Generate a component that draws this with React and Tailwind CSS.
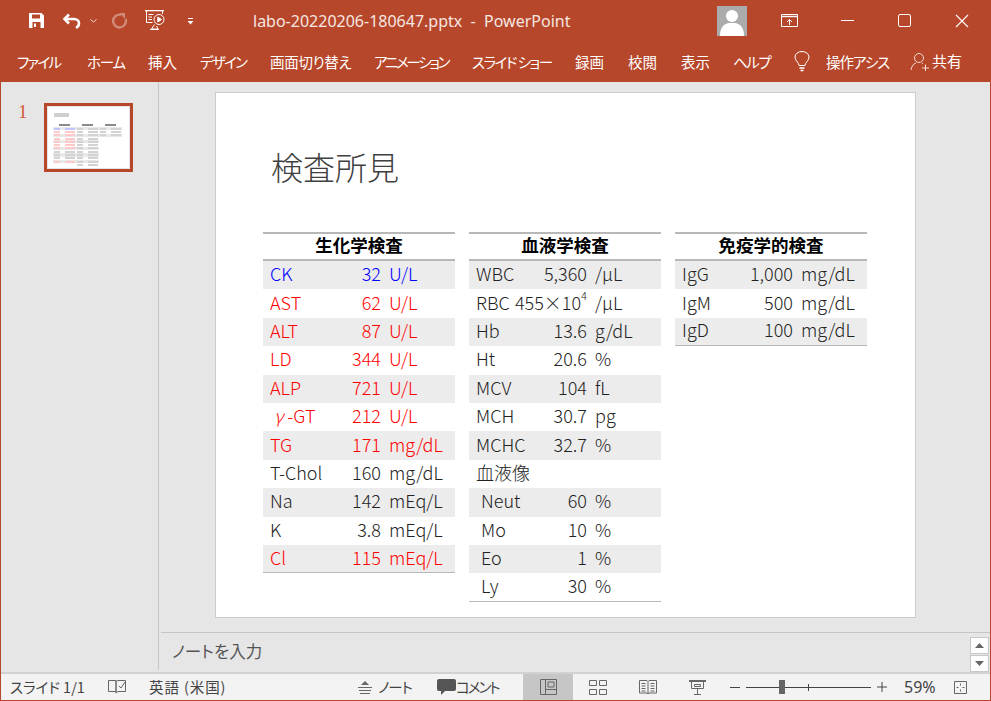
import React from "react";

const chem = [
  ["CK", "32", "U/L", "text-[#0000ff]"],
  ["AST", "62", "U/L", "text-[#ff0000]"],
  ["ALT", "87", "U/L", "text-[#ff0000]"],
  ["LD", "344", "U/L", "text-[#ff0000]"],
  ["ALP", "721", "U/L", "text-[#ff0000]"],
  [<span className="pl-[4px]"><i>γ</i> -GT</span>, "212", "U/L", "text-[#ff0000]"],
  ["TG", "171", "mg/dL", "text-[#ff0000]"],
  ["T-Chol", "160", "mg/dL", ""],
  ["Na", "142", "mEq/L", ""],
  ["K", "3.8", "mEq/L", ""],
  ["Cl", "115", "mEq/L", "text-[#ff0000]"],
];

const blood = [
  ["WBC", "5,360", "/μL"],
  ["RBC", <span>455×10<sup className="text-[11px] align-[4px] leading-none">4</sup></span>, "/μL"],
  ["Hb", "13.6", "g/dL"],
  ["Ht", "20.6", "%"],
  ["MCV", "104", "fL"],
  ["MCH", "30.7", "pg"],
  ["MCHC", "32.7", "%"],
  ["血液像", "", ""],
  [<span className="pl-[5px]">Neut</span>, "60", "%"],
  [<span className="pl-[5px]">Mo</span>, "10", "%"],
  [<span className="pl-[5px]">Eo</span>, "1", "%"],
  [<span className="pl-[5px]">Ly</span>, "30", "%"],
];

const immune = [
  ["IgG", "1,000", "mg/dL"],
  ["IgM", "500", "mg/dL"],
  ["IgD", "100", "mg/dL"],
];

const tabs = [
  ["ファイル", "w-[86px] pl-[16px] tracking-[-1.7px]"],
  ["ホーム", "w-[61px] tracking-[-1.2px]"],
  ["挿入", "w-[52px]"],
  ["デザイン", "w-[70px] tracking-[-1.7px]"],
  ["画面切り替え", "w-[104px] tracking-[-0.3px]"],
  ["アニメーション", "w-[98px] tracking-[-2.3px]"],
  ["スライド ショー", "w-[103px] tracking-[-1.5px]"],
  ["録画", "w-[53px]"],
  ["校閲", "w-[53px]"],
  ["表示", "w-[52px]"],
  ["ヘルプ", "w-[61px] tracking-[-1.5px]"],
];

function Row({ name, value, unit, color, shade, last }) {
  return (
    <div
      className={`grid grid-cols-[118px_1fr] h-[28.4px] pb-[4px] items-center text-[18px] leading-none font-light ${shade ? "bg-[#ececec]" : ""} ${color || "text-[#222222]"} ${last ? "border-b border-[#b8b8b8]" : ""}`}
    >
      <div className="relative flex items-center justify-end whitespace-nowrap">
        <span className="absolute left-[7px] whitespace-pre">{name}</span>
        <span>{value}</span>
      </div>
      <span className="pl-[8px] whitespace-nowrap">{unit}</span>
    </div>
  );
}

function LabTable({ title, children }) {
  return (
    <div className="w-[192px]">
      <div className="h-[29px] pb-[2px] border-t-2 border-b-2 border-[#b8b8b8] flex items-center justify-center text-[17.5px] font-bold text-black">
        {title}
      </div>
      {children}
    </div>
  );
}

function ThumbCol({ colors }) {
  return (
    <div className="w-[23px]">
      <div className="h-[4px] flex justify-center items-center"><div className="h-[2px] w-[11px] bg-[#8a8a8a]"></div></div>
      {colors.map((c, i) => (
        <div key={i} className={`h-[3.3px] flex justify-between items-center px-[1px] ${i % 2 === 0 ? "bg-[#e8e8e8]" : ""}`}>
          <div className={`h-[2px] w-[6px] ${c}`}></div>
          <div className={`h-[2px] w-[10px] ${c}`}></div>
        </div>
      ))}
    </div>
  );
}

function Thumb() {
  const r = "bg-[#ffc9c9]";
  const g = "bg-[#d2d2d2]";
  return (
    <div className="w-[89px] h-[69px] border-[3px] border-[#b7472a] bg-[#e4e4e4] p-[1px] shrink-0">
      <div className="w-full h-full bg-white pt-[6px] pl-[5px]">
        <div className="h-[4px] w-[15px] bg-[#cfcfcf] ml-[1px] mb-[6px]"></div>
        <div className="flex">
          <ThumbCol colors={["bg-[#c2c2ff]", r, r, r, r, r, r, g, g, g, r]} />
          <ThumbCol colors={Array(12).fill(g)} />
          <ThumbCol colors={Array(3).fill(g)} />
        </div>
      </div>
    </div>
  );
}

function SaveIcon() {
  return (
    <svg width="17" height="17" viewBox="0 0 17 17" fill="#fff">
      <path fillRule="evenodd" d="M1 1h12.5L16 3.5V16H1zM4 2.5v4h8v-4zM4.5 10v6h8v-6z" />
      <rect x="6" y="11.5" width="2" height="3.5" />
    </svg>
  );
}

function UndoIcon() {
  return (
    <svg width="19" height="16" viewBox="0 0 19 16" fill="none" stroke="#fff" strokeWidth="2.6">
      <path d="M7 1.5 2.5 6 7 10.5" />
      <path d="M3 6h9c3 0 5 2 5 4.2 0 2-1 3.6-3 4.6" />
    </svg>
  );
}

function RedoIcon() {
  return (
    <svg width="17" height="17" viewBox="0 0 17 17" fill="none" stroke="#d08a78" strokeWidth="2.4">
      <path d="M10 2.8A6.4 6.4 0 1 0 14.6 7" />
      <path d="M8.5 1h5.5v6" fill="#d08a78" stroke="none" />
    </svg>
  );
}

function PresentIcon() {
  return (
    <svg width="21" height="21" viewBox="0 0 21 21" fill="none" stroke="#fff" strokeWidth="1">
      <path d="M0 .5h19" strokeWidth="1.6" />
      <path d="M1.5 1v11.5h6" />
      <path d="M17.5 1v3" />
      <path d="M3.5 4.5h5M3.5 7h3.5M3.5 9.5h3.5" />
      <circle cx="14" cy="9.5" r="5" />
      <path d="M12.8 7v5l3.7-2.5z" fill="#fff" />
      <path d="M9.5 14.5 6.5 19h6.5l-1.5-3" />
      <path d="M5 19.5h9" />
    </svg>
  );
}

export default function App() {
  return (
    <div
      className="w-[991px] h-[701px] flex flex-col overflow-hidden bg-[#e6e6e6] border-x border-b border-[#b7472a] [font-feature-settings:'palt']"
      style={{ fontFamily: '"Noto Sans CJK JP", "Noto Sans", sans-serif' }}
    >
      {/* title bar */}
      <div className="h-[41px] shrink-0 bg-[#b7472a] flex items-center text-white">
        <div className="w-[27px] shrink-0"></div>
        <SaveIcon />
        <div className="w-[17px] shrink-0"></div>
        <UndoIcon />
        <svg className="ml-[9px]" width="7" height="4" viewBox="0 0 7 4" fill="none" stroke="#f3d9d2"><path d="M.5.5 3.5 3l3-2.5" /></svg>
        <div className="w-[14px] shrink-0"></div>
        <RedoIcon />
        <div className="w-[17px] shrink-0"></div>
        <PresentIcon />
        <svg className="ml-[21px] mt-[2px]" width="7" height="7" viewBox="0 0 7 7" fill="#fff"><path d="M1 0h5v1H1zM.5 3h6l-3 3.5z" /></svg>
        <div
          className="w-[317px] pl-[59px] shrink-0 text-[16px] whitespace-nowrap text-[#f6e6e1]"
          style={{ fontFamily: '"Noto Sans", sans-serif' }}
        >
          labo-20220206-180647.pptx&nbsp; -&nbsp; PowerPoint
        </div>
        <div className="w-[30px] h-[30px] ml-[206px] bg-[#ababab] shrink-0 overflow-hidden">
          <svg width="30" height="30" viewBox="0 0 30 30" fill="#fff">
            <circle cx="15" cy="10" r="6" />
            <path d="M3 30c0-8 3-12 9-13h6c6 1 9 5 9 13z" />
          </svg>
        </div>
        <svg className="ml-[34px]" width="17" height="13" viewBox="0 0 17 13" fill="none" stroke="#fff">
          <path d="M.5.5h16v12H.5z" />
          <path d="M.5 2.5h16" strokeWidth="1.4" />
          <path d="M8.5 11V5.5M6 8l2.5-2.5L11 8" />
        </svg>
        <div className="ml-[43px] w-[13px] h-[1px] bg-white"></div>
        <div className="ml-[44px] w-[13px] h-[13px] border border-white rounded-[2px]"></div>
        <svg className="ml-[44px]" width="14" height="14" viewBox="0 0 14 14" stroke="#fff" strokeWidth="1.1"><path d="M1 1l12 12M13 1 1 13" /></svg>
      </div>

      {/* ribbon tabs */}
      <div className="h-[41px] shrink-0 bg-[#b7472a] flex items-center text-white text-[14.5px]">
        {tabs.map(([t, w]) => (
          <div key={t} className={`${w} shrink-0 whitespace-nowrap`}>{t}</div>
        ))}
        <svg width="16" height="21" viewBox="0 0 16 21" fill="none" stroke="#fff">
          <path d="M5 14.5c0-3-4-4.500-4-8.500a7 5.500 0 0 1 14 0c0 4-4 5.500-4 8.500z" />
          <path d="M5.500 17h5M6.500 19.500h3" strokeWidth="1.4" />
        </svg>
        <div className="ml-[16px] w-[62px] whitespace-nowrap tracking-[-1px]">操作アシス</div>
        <svg className="ml-[22px]" width="20" height="19" viewBox="0 0 20 19" fill="none" stroke="#f4dcd5">
          <circle cx="9" cy="6" r="4.500" />
          <path d="M1 18c.5-4 3-6.500 5-7M12 11l1 1M12 16h7M15.500 12.500v6.500" />
        </svg>
        <div className="ml-[2px] text-[15px] whitespace-nowrap">共有</div>
      </div>

      {/* work area */}
      <div className="flex-1 flex min-h-0">
        <div className="w-[158px] mb-[2px] shrink-0 border-r border-[#c6c6c6] flex pt-[21px] pl-[17px]">
          <span className="text-[19px] leading-none text-[#d4563a] mr-[16px] mt-[-1px]" style={{ fontFamily: '"Liberation Serif", serif' }}>1</span>
          <Thumb />
        </div>

        <div className="flex-1 flex flex-col min-w-0">
          <div className="flex-1 pt-[10px] pl-[56px]">
            <div className="w-[701px] h-[526px] bg-white border border-[#cccccc] pl-[47px]">
              <h1 className="pt-[51px] pl-[8px] h-[139px] text-[32px] leading-[44px] font-light text-[#404040]">検査所見</h1>
              <div className="flex gap-[14px]">
                <LabTable title="生化学検査">
                  {chem.map((r, i) => (
                    <Row key={i} name={r[0]} value={r[1]} unit={r[2]} color={r[3]} shade={i % 2 === 0} last={i === chem.length - 1} />
                  ))}
                </LabTable>
                <LabTable title="血液学検査">
                  {blood.map((r, i) => (
                    <Row key={i} name={r[0]} value={r[1]} unit={r[2]} shade={i % 2 === 0} last={i === blood.length - 1} />
                  ))}
                </LabTable>
                <LabTable title="免疫学的検査">
                  {immune.map((r, i) => (
                    <Row key={i} name={r[0]} value={r[1]} unit={r[2]} shade={i % 2 === 0} last={i === immune.length - 1} />
                  ))}
                </LabTable>
              </div>
            </div>
          </div>

          <div className="h-[40px] shrink-0 ml-[2px] border-t border-[#c6c6c6] flex justify-between pl-[11px] pr-[1px]">
            <span className="text-[16.5px] leading-[37px] text-[#555555]">ノートを入力</span>
            <div className="flex flex-col gap-[1px] mt-[4px]">
              <div className="w-[19px] h-[17px] bg-white border border-[#c8c8c8] flex items-center justify-center">
                <svg width="9" height="5" viewBox="0 0 9 5" fill="#666666"><path d="M4.500 0 9 5H0z" /></svg>
              </div>
              <div className="w-[19px] h-[17px] bg-white border border-[#c8c8c8] flex items-center justify-center">
                <svg width="9" height="5" viewBox="0 0 9 5" fill="#666666"><path d="M4.500 5 9 0H0z" /></svg>
              </div>
            </div>
          </div>
        </div>
      </div>

      {/* status bar */}
      <div className="h-[28px] shrink-0 bg-[#f3f3f3] border-t-2 border-[#d2d2d2] flex items-center text-[14.5px] text-[#444444]">
        <span className="ml-[9px] w-[98px] shrink-0 whitespace-nowrap">スライド 1/1</span>
        <svg width="18" height="14" viewBox="0 0 18 14" fill="none" stroke="#666666">
          <path d="M.5.500h7.500v11H.5zM8 1.500 10 .5h7.500v11H10l-2 1.500z" />
          <path d="M11 6l2 2 4-6" />
        </svg>
        <span className="ml-[23px] w-[209px] shrink-0 whitespace-nowrap tracking-[0.9px]">英語 (米国)</span>
        <svg width="14" height="13" viewBox="0 0 14 13" fill="#666666"><path d="M7 0l4 4H3zM0 6h14v1H0zM1 9h12v1H1zM2 12h10v1H2z" /></svg>
        <span className="ml-[6px] w-[59px] shrink-0 whitespace-nowrap tracking-[-1px]">ノート</span>
        <svg width="19" height="16" viewBox="0 0 19 16" fill="#555555"><path d="M2 0h15a2 2 0 0 1 2 2v8a2 2 0 0 1-2 2H8l-4 4v-4H2a2 2 0 0 1-2-2V2a2 2 0 0 1 2-2z" /></svg>
        <span className="w-[67px] shrink-0 whitespace-nowrap tracking-[-2px]">コメント</span>
        <div className="w-[50px] h-full shrink-0 bg-[#c6c6c6] flex items-center justify-center">
          <svg width="17" height="16" viewBox="0 0 17 16" fill="none" stroke="#666666"><path d="M.5.500h16v15H.5zM5.500.500v15M5.500 10.500h11M8 3h6v5H8z" /></svg>
        </div>
        <svg className="ml-[16px]" width="18" height="15" viewBox="0 0 18 15" fill="none" stroke="#666666"><path d="M.5.500h7v5h-7zM10.500.500h7v5h-7zM.5 9.500h7v5h-7zM10.500 9.500h7v5h-7z" /></svg>
        <svg className="ml-[32px]" width="18" height="15" viewBox="0 0 18 15" fill="none" stroke="#666666"><path d="M.5.500h7.500l1 1 1-1h7.500v12.500H10l-1 1-1-1H.5zM9 1.500V14M2.500 3.500h4M2.500 6h4M2.500 8.500h4M2.500 11h4M11.500 3.500h4M11.500 6h4M11.500 8.500h4M11.500 11h4" /></svg>
        <svg className="ml-[32px]" width="17" height="15" viewBox="0 0 17 15" fill="none" stroke="#666666"><path d="M0 1h17" strokeWidth="2" /><path d="M2.500 1.500v7h12v-7M8.500 8.500v5.500M5 14.500h7M5.500 4.500h6v2h-6z" /></svg>
        <div className="ml-[24px] w-[10px] h-[1px] bg-[#444444]"></div>
        <div className="ml-[6px] w-[125px] h-[1px] bg-[#444444] relative shrink-0">
          <div className="absolute left-[33px] top-[-7px] w-[6px] h-[14px] bg-[#666666]"></div>
          <div className="absolute left-[62px] top-[-3px] w-[1px] h-[7px] bg-[#444444]"></div>
        </div>
        <svg className="ml-[6px]" width="10" height="10" viewBox="0 0 10 10" stroke="#444444"><path d="M0 5h10M5 0v10" /></svg>
        <span className="ml-[17px] w-[50px] shrink-0 text-[16px]" style={{ fontFamily: '"Noto Sans", sans-serif' }}>59%</span>
        <svg width="13" height="13" viewBox="0 0 13 13" fill="none" stroke="#666666"><path d="M.5.500h12v12H.5z" /><path d="M6.500 2.500v2M6.500 8.500v2M2.500 6.500h2M8.500 6.500h2" /></svg>
      </div>
    </div>
  );
}
